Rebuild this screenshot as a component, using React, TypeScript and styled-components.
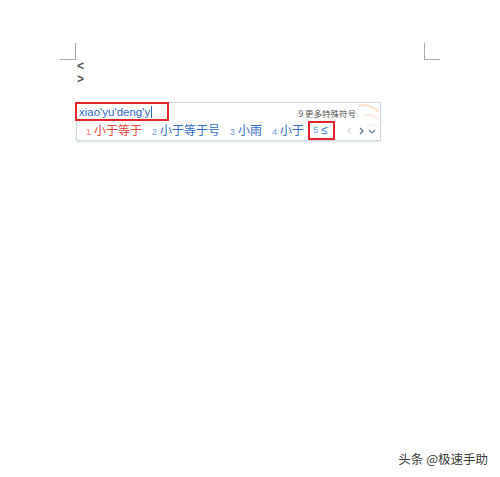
import React from "react";
import styled, {createGlobalStyle} from "styled-components";

const GlobalStyle = createGlobalStyle`
  html, body {
    margin: 0;
    padding: 0;
    background: #ffffff;
  }
  body {
    font-family: "Liberation Sans", "Noto Sans CJK SC", sans-serif;
  }
`

const Page = styled.div`
  min-height: 477px;
  box-sizing: border-box;
  padding: 43px 60px 0 60px;
  display: flex;
  flex-direction: column;
`

const MarginRow = styled.div`
  display: flex;
  justify-content: space-between;
`

const CornerMark = styled.div<{ $side: "left" | "right" }>`
  width: 15px;
  height: 16px;
  border-bottom: 1px solid #a8a8a8;
  ${p => p.$side === "left" ? "border-right: 1px solid #a8a8a8;" : "border-left: 1px solid #a8a8a8;"}
`

const Symbols = styled.div`
  margin: 0 0 0 17px;
  display: flex;
  flex-direction: column;
  font-family: "Liberation Sans", sans-serif;
  font-weight: bold;
  font-size: 12px;
  line-height: 13px;
  color: #555;
`

const ImeBox = styled.div`
  position: relative;
  margin: 16px 0 0 16px;
  width: 305px;
  height: 39px;
  box-sizing: border-box;
  border: 1px solid #cfd9e4;
  border-radius: 2px;
  box-shadow: 0 1px 2px rgba(120, 140, 170, 0.25);
  background: #fff;
  display: flex;
  flex-direction: column;
`

const Swirl = styled.svg`
  position: absolute;
  right: 0;
  top: 0;
`

const TopLine = styled.div`
  display: flex;
  justify-content: space-between;
  align-items: flex-start;
  height: 19px;
`

const Composition = styled.div`
  margin: -1px 0 0 -2px;
  width: 94px;
  height: 19px;
  box-sizing: border-box;
  border: 2px solid #e2262c;
  padding: 0 0 0 2px;
  display: flex;
  align-items: center;
  font-size: 11.5px;
  color: #2e68bd;
  white-space: nowrap;
`

const Caret = styled.span`
  display: inline-block;
  width: 1px;
  height: 12px;
  margin-left: 1px;
  background: #2e68bd;
`

const MoreSymbols = styled.div`
  margin: 4px 24px 0 0;
  font-family: "Noto Sans CJK SC", sans-serif;
  font-size: 8.5px;
  line-height: 12px;
  color: #555;
  position: relative;
  white-space: nowrap;
`

const Candidates = styled.div`
  display: flex;
  align-items: center;
  padding-left: 9px;
  height: 19px;
`

const Candidate = styled.div<{ $active?: boolean; $marked?: boolean }>`
  display: flex;
  align-items: baseline;
  flex-shrink: 0;
  white-space: nowrap;
  margin-right: ${p => p.$marked ? "11px" : "10px"};
  color: ${p => p.$active ? "#e8423c" : "#2e6ec2"};
  font-family: "Noto Sans CJK SC", sans-serif;
  font-size: 12px;
  line-height: 15px;
  ${p => p.$marked ? `
    margin-left: -6px;
    border: 2px solid #e2262c;
    padding: 0 5px 0 3px;
    height: 19px;
    box-sizing: border-box;
    align-items: center;
  ` : ""}
`

const Num = styled.span<{ $active?: boolean }>`
  font-family: "Liberation Sans", sans-serif;
  font-size: 9px;
  margin-right: 3px;
  color: ${p => p.$active ? "#ef7a73" : "#6d9ad6"};
`

const Symbol = styled.span`
  font-family: "Liberation Sans", sans-serif;
  font-size: 12px;
`

const Pager = styled.div`
  display: flex;
  align-items: center;
  gap: 3px;
  flex-shrink: 0;
`

const Watermark = styled.div`
  margin-top: auto;
  align-self: flex-end;
  margin-right: -48px;
  margin-bottom: 9px;
  font-family: "Noto Sans CJK SC", sans-serif;
  font-size: 12.5px;
  color: #3a3a3a;
  text-shadow: 0 0 2px #fff, 0 0 1px #fff;
`

const candidates = [
  {n: 1, text: "小于等于", active: true},
  {n: 2, text: "小于等于号"},
  {n: 3, text: "小雨"},
  {n: 4, text: "小于"},
]

const Chevron = ({d, color}: { d: string, color: string }) =>
  <svg width="8" height="10" viewBox="0 0 8 10">
    <path d={d} fill="none" stroke={color} strokeWidth="1.2" />
  </svg>

export default function App() {
  return <>
    <GlobalStyle />
    <Page>
      <MarginRow>
        <CornerMark $side="left" />
        <CornerMark $side="right" />
      </MarginRow>
      <Symbols>
        <span>&lt;</span>
        <span>&gt;</span>
      </Symbols>
      <ImeBox>
        <Swirl width="28" height="28" viewBox="0 0 28 28">
          <path d="M6 3 C14 1, 22 4, 27 9" fill="none" stroke="#f7d2b8" strokeWidth="2.5" opacity="0.6" />
          <path d="M12 13 C18 10, 23 13, 27 17" fill="none" stroke="#f9dcc8" strokeWidth="2" opacity="0.5" />
          <path d="M16 24 C20 21, 24 22, 27 25" fill="none" stroke="#fbe6d8" strokeWidth="1.5" opacity="0.5" />
        </Swirl>
        <TopLine>
          <Composition>
            xiao'yu'deng'y<Caret />
          </Composition>
          <MoreSymbols>9 更多特殊符号</MoreSymbols>
        </TopLine>
        <Candidates>
          {candidates.map(c => <Candidate key={c.n} $active={c.active}>
            <Num $active={c.active}>{c.n}</Num>{c.text}
          </Candidate>)}
          <Candidate $marked>
            <Num>5</Num><Symbol>≤</Symbol>
          </Candidate>
          <Pager>
            <Chevron d="M5 2 L2 5 L5 8" color="#d4dbe4" />
            <Chevron d="M3 2 L6 5 L3 8" color="#5b6f88" />
            <Chevron d="M1 4 L4 7 L7 4" color="#6b86a8" />
          </Pager>
        </Candidates>
      </ImeBox>
      <Watermark>头条 @极速手助</Watermark>
    </Page>
  </>
}
